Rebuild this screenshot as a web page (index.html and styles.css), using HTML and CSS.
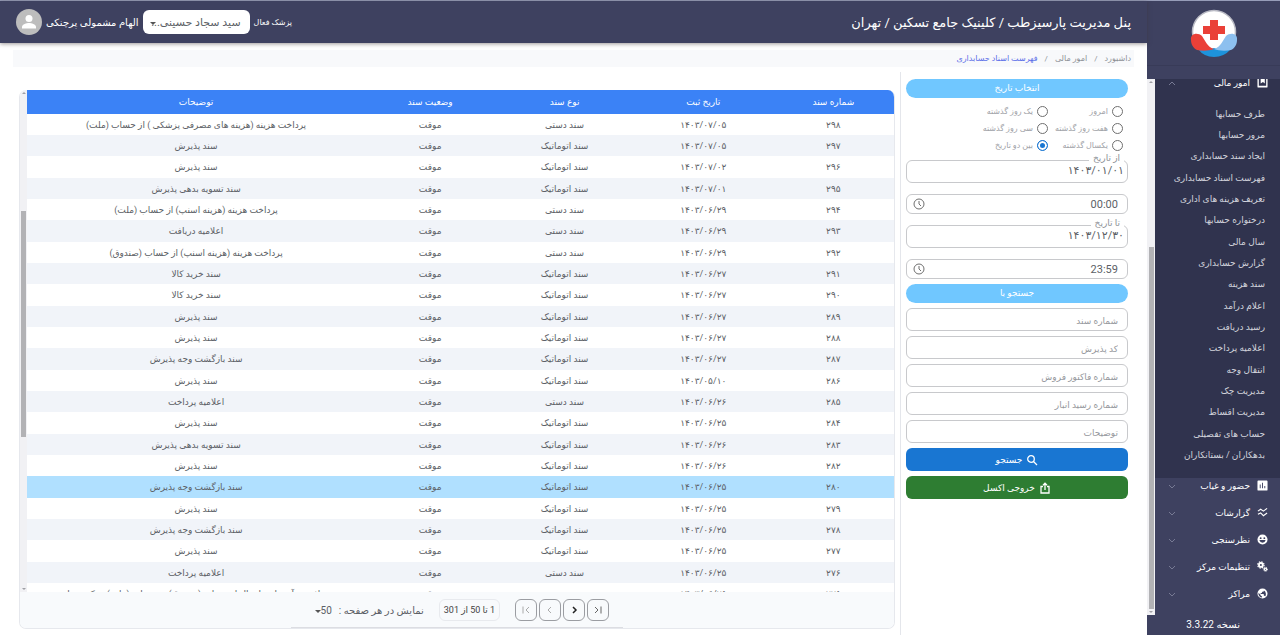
FILE: index.html
```html
<!DOCTYPE html>
<html lang="fa" dir="rtl">
<head>
<meta charset="utf-8">
<title>فهرست اسناد حسابداری</title>
<link rel="stylesheet" href="styles.css">
</head>
<body>
<div class="app">
  <aside class="sidebar">
    <div class="brand">
      <svg class="brand-logo" viewBox="0 0 48 50" role="img" aria-label="پارسیزطب">
        <circle cx="24" cy="23" r="21.500" fill="#fff" stroke="#b9bac4" stroke-width="1.500"/>
        <path d="M8 40Q16 42 24 39Q32 42 41 40Q34 48 24 48Q14 48 8 40z" fill="#1d93dc"/>
        <path d="M1 31C0 24 8 23 12 27C15 31 17 38 24 40C19 42 12 42 7 41C3 39 1 35 1 31z" fill="#ea4038"/>
        <path d="M47 31C48 24 40 23 36 27C33 31 31 38 24 40C29 42 36 42 41 41C45 39 47 35 47 31z" fill="#8dc0ef"/>
        <path d="M20 11h8v6h7v8h-7v6h-8v-6h-7v-8h7z" fill="#ea4038"/>
      </svg>
    </div>
    <div class="menu-area">
      <nav class="menu">
        <section class="menu-open">
          <button class="menu-item" type="button">
            <svg class="menu-icon" viewBox="0 0 24 24"><path fill="#fff" fill-rule="evenodd" d="M3 1h18a2 2 0 0 1 2 2v18a2 2 0 0 1-2 2H3a2 2 0 0 1-2-2V3a2 2 0 0 1 2-2zm1 3v15h16V4h-3v10l-4-3-5 3V4z"/></svg>
            <span>امور مالی</span>
            <svg class="menu-chevron" viewBox="0 0 10 10"><path d="M2 7l3-3 3 3"/></svg>
          </button>
          <ul class="submenu">
            <li><a href="#">طرف حسابها</a></li>
            <li><a href="#">مرور حسابها</a></li>
            <li><a href="#">ایجاد سند حسابداری</a></li>
            <li><a href="#">فهرست اسناد حسابداری</a></li>
            <li><a href="#">تعریف هزینه های اداری</a></li>
            <li><a href="#">درختواره حسابها</a></li>
            <li><a href="#">سال مالی</a></li>
            <li><a href="#">گزارش حسابداری</a></li>
            <li><a href="#">سند هزینه</a></li>
            <li><a href="#">اعلام درآمد</a></li>
            <li><a href="#">رسید دریافت</a></li>
            <li><a href="#">اعلامیه پرداخت</a></li>
            <li><a href="#">انتقال وجه</a></li>
            <li><a href="#">مدیریت چک</a></li>
            <li><a href="#">مدیریت اقساط</a></li>
            <li><a href="#">حساب های تفصیلی</a></li>
            <li><a href="#">بدهکاران / بستانکاران</a></li>
          </ul>
        </section>
        <section class="menu-rest">
          <button class="menu-item" type="button">
            <svg class="menu-icon" viewBox="0 0 24 24"><path fill="#fff" fill-rule="evenodd" d="M3 1h18a2 2 0 0 1 2 2v18a2 2 0 0 1-2 2H3a2 2 0 0 1-2-2V3a2 2 0 0 1 2-2zm3 9v8h2v-8zm5-4v12h2V6zm5 7v5h2v-5z"/></svg>
            <span>حضور و غیاب</span>
            <svg class="menu-chevron" viewBox="0 0 10 10"><path d="M2 4l3 3 3-3"/></svg>
          </button>
          <button class="menu-item" type="button">
            <svg class="menu-icon" viewBox="0 0 24 24"><path fill="none" stroke="#fff" stroke-width="2.500" d="M2 9l6-4 6 4 8-6M2 16l6-3 6 6 8-6"/></svg>
            <span>گزارشات</span>
            <svg class="menu-chevron" viewBox="0 0 10 10"><path d="M2 4l3 3 3-3"/></svg>
          </button>
          <button class="menu-item" type="button">
            <svg class="menu-icon" viewBox="0 0 24 24"><circle cx="12" cy="12" r="11" fill="#fff"/><circle cx="8" cy="9" r="2" fill="#3e4160"/><circle cx="16" cy="9" r="2" fill="#3e4160"/><path fill="#3e4160" d="M5 13h14q-2 6-7 6t-7-6z"/></svg>
            <span>نظرسنجی</span>
            <svg class="menu-chevron" viewBox="0 0 10 10"><path d="M2 4l3 3 3-3"/></svg>
          </button>
          <button class="menu-item" type="button">
            <svg class="menu-icon" viewBox="0 0 24 24"><g fill="none" stroke="#fff"><circle cx="8.500" cy="8.500" r="4.200" stroke-width="4"/><circle cx="8.500" cy="8.500" r="7" stroke-width="2.500" stroke-dasharray="3 2.500"/><circle cx="18.500" cy="18" r="2.600" stroke-width="2.600"/><circle cx="18.500" cy="18" r="4.500" stroke-width="2" stroke-dasharray="2.200 1.900"/></g></svg>
            <span>تنظیمات مرکز</span>
            <svg class="menu-chevron" viewBox="0 0 10 10"><path d="M2 4l3 3 3-3"/></svg>
          </button>
          <button class="menu-item" type="button">
            <svg class="menu-icon" viewBox="0 0 24 24"><path fill="#fff" d="M12 1a11 11 0 1 0 0 22 11 11 0 0 0 0-22zm-1 19.900A9 9 0 0 1 3.300 10.200L8 15v1c0 1.100.900 2 2 2h1zm6.900-2.500A2 2 0 0 0 16 17h-1v-3a1 1 0 0 0-1-1H8v-2h2a1 1 0 0 0 1-1V8h2a2 2 0 0 0 2-2v-.400a9 9 0 0 1 2.900 12.800z"/></svg>
            <span>مراکز</span>
            <svg class="menu-chevron" viewBox="0 0 10 10"><path d="M2 4l3 3 3-3"/></svg>
          </button>
        </section>
      </nav>
      <div class="scrollbar menu-scrollbar" aria-hidden="true"><i class="arrow-up"></i><i class="thumb"></i><i class="arrow-down"></i></div>
    </div>
    <div class="version">نسخه 3.3.22</div>
  </aside>

  <div class="page">
    <header class="topbar">
      <h1 class="topbar-title">پنل مدیریت پارسیزطب / کلینیک جامع تسکین / تهران</h1>
      <div class="topbar-user">
        <label class="doctor-label" for="doctor">پزشک فعال</label>
        <span class="select-wrap">
          <select class="doctor-select" id="doctor"><option>سید سجاد حسینی...</option></select>
          <i class="caret doctor-caret"></i>
        </span>
        <span class="user-name">الهام مشمولی پرچنکی</span>
        <svg class="avatar" viewBox="0 0 26 26" role="img" aria-label="کاربر"><circle cx="13" cy="13" r="13" fill="#bdbdbd"/><circle cx="13" cy="9.500" r="3.500" fill="#fff"/><path fill="#fff" d="M6 19.500v-1.500c0-2.600 4.600-4 7-4s7 1.400 7 4v1.500z"/></svg>
      </div>
    </header>

    <nav class="breadcrumb">
      <a href="#">داشبورد</a><span>/</span><a href="#">امور مالی</a><span>/</span><a class="current" href="#">فهرست اسناد حسابداری</a>
    </nav>

    <main class="content">
      <form class="filters">
        <h2 class="pill">انتخاب تاریخ</h2>
        <div class="ranges">
          <label><input type="radio" name="range">امروز</label>
          <label><input type="radio" name="range">یک روز گذشته</label>
          <label><input type="radio" name="range">هفت روز گذشته</label>
          <label><input type="radio" name="range">سی روز گذشته</label>
          <label><input type="radio" name="range">یکسال گذشته</label>
          <label><input type="radio" name="range" checked>بین دو تاریخ</label>
        </div>
        <div class="date-field">
          <label for="from-date">از تاریخ</label>
          <input class="field date-input" id="from-date" type="text" value="۱۴۰۳/۰۱/۰۱">
        </div>
        <div class="time-field">
          <input class="field time-input" type="text" value="00:00" aria-label="از ساعت">
          <svg class="clock" viewBox="0 0 12 12"><circle cx="6" cy="6" r="5"/><path d="M6 3v3l2 2"/></svg>
        </div>
        <div class="date-field">
          <label for="to-date">تا تاریخ</label>
          <input class="field date-input" id="to-date" type="text" value="۱۴۰۳/۱۲/۳۰">
        </div>
        <div class="time-field last">
          <input class="field time-input" type="text" value="23:59" aria-label="تا ساعت">
          <svg class="clock" viewBox="0 0 12 12"><circle cx="6" cy="6" r="5"/><path d="M6 3v3l2 2"/></svg>
        </div>
        <h2 class="pill">جستجو با</h2>
        <div class="stack">
          <input class="field" type="text" placeholder="شماره سند" aria-label="شماره سند">
          <input class="field" type="text" placeholder="کد پذیرش" aria-label="کد پذیرش">
          <input class="field" type="text" placeholder="شماره فاکتور فروش" aria-label="شماره فاکتور فروش">
          <input class="field" type="text" placeholder="شماره رسید انبار" aria-label="شماره رسید انبار">
          <input class="field" type="text" placeholder="توضیحات" aria-label="توضیحات">
          <button class="action search" type="button"><svg viewBox="0 0 12 12"><circle cx="5" cy="5" r="3.300"/><path d="M7.500 7.500l3.500 3.500"/></svg>جستجو</button>
          <button class="action export" type="button"><svg viewBox="0 0 12 12"><path d="M4 4.500H2v6.500h8V4.500H8M6 8V1.500M4 3.200l2-2 2 2"/></svg>خروجی اکسل</button>
        </div>
      </form>

      <section class="card">
        <div class="table-area">
          <div class="table-view">
            <table class="docs">
              <colgroup><col class="c-num"><col class="c-date"><col class="c-type"><col class="c-state"><col class="c-desc"></colgroup>
              <thead><tr><th>شماره سند</th><th>تاریخ ثبت</th><th>نوع سند</th><th>وضعیت سند</th><th>توضیحات</th></tr></thead>
              <tbody>
                <tr><td>۲۹۸</td><td>۱۴۰۳/۰۷/۰۵</td><td>سند دستی</td><td>موقت</td><td>پرداخت هزینه (هزینه های مصرفی پزشکی ) از حساب (ملت)</td></tr>
                <tr><td>۲۹۷</td><td>۱۴۰۳/۰۷/۰۵</td><td>سند اتوماتیک</td><td>موقت</td><td>سند پذیرش</td></tr>
                <tr><td>۲۹۶</td><td>۱۴۰۳/۰۷/۰۲</td><td>سند اتوماتیک</td><td>موقت</td><td>سند پذیرش</td></tr>
                <tr><td>۲۹۵</td><td>۱۴۰۳/۰۷/۰۱</td><td>سند اتوماتیک</td><td>موقت</td><td>سند تسویه بدهی پذیرش</td></tr>
                <tr><td>۲۹۴</td><td>۱۴۰۳/۰۶/۲۹</td><td>سند دستی</td><td>موقت</td><td>پرداخت هزینه (هزینه اسنپ) از حساب (ملت)</td></tr>
                <tr><td>۲۹۳</td><td>۱۴۰۳/۰۶/۲۹</td><td>سند دستی</td><td>موقت</td><td>اعلامیه دریافت</td></tr>
                <tr><td>۲۹۲</td><td>۱۴۰۳/۰۶/۲۹</td><td>سند دستی</td><td>موقت</td><td>پرداخت هزینه (هزینه اسنپ) از حساب (صندوق)</td></tr>
                <tr><td>۲۹۱</td><td>۱۴۰۳/۰۶/۲۷</td><td>سند اتوماتیک</td><td>موقت</td><td>سند خرید کالا</td></tr>
                <tr><td>۲۹۰</td><td>۱۴۰۳/۰۶/۲۷</td><td>سند اتوماتیک</td><td>موقت</td><td>سند خرید کالا</td></tr>
                <tr><td>۲۸۹</td><td>۱۴۰۳/۰۶/۲۷</td><td>سند اتوماتیک</td><td>موقت</td><td>سند پذیرش</td></tr>
                <tr><td>۲۸۸</td><td>۱۴۰۳/۰۶/۲۷</td><td>سند اتوماتیک</td><td>موقت</td><td>سند پذیرش</td></tr>
                <tr><td>۲۸۷</td><td>۱۴۰۳/۰۶/۲۷</td><td>سند اتوماتیک</td><td>موقت</td><td>سند بازگشت وجه پذیرش</td></tr>
                <tr><td>۲۸۶</td><td>۱۴۰۳/۰۵/۱۰</td><td>سند اتوماتیک</td><td>موقت</td><td>سند پذیرش</td></tr>
                <tr><td>۲۸۵</td><td>۱۴۰۳/۰۶/۲۶</td><td>سند دستی</td><td>موقت</td><td>اعلامیه پرداخت</td></tr>
                <tr><td>۲۸۴</td><td>۱۴۰۳/۰۶/۲۵</td><td>سند اتوماتیک</td><td>موقت</td><td>سند پذیرش</td></tr>
                <tr><td>۲۸۳</td><td>۱۴۰۳/۰۶/۲۶</td><td>سند اتوماتیک</td><td>موقت</td><td>سند تسویه بدهی پذیرش</td></tr>
                <tr><td>۲۸۲</td><td>۱۴۰۳/۰۶/۲۶</td><td>سند اتوماتیک</td><td>موقت</td><td>سند پذیرش</td></tr>
                <tr class="selected"><td>۲۸۰</td><td>۱۴۰۳/۰۶/۲۵</td><td>سند اتوماتیک</td><td>موقت</td><td>سند بازگشت وجه پذیرش</td></tr>
                <tr><td>۲۷۹</td><td>۱۴۰۳/۰۶/۲۵</td><td>سند اتوماتیک</td><td>موقت</td><td>سند پذیرش</td></tr>
                <tr><td>۲۷۸</td><td>۱۴۰۳/۰۶/۲۵</td><td>سند اتوماتیک</td><td>موقت</td><td>سند بازگشت وجه پذیرش</td></tr>
                <tr><td>۲۷۷</td><td>۱۴۰۳/۰۶/۲۵</td><td>سند اتوماتیک</td><td>موقت</td><td>سند پذیرش</td></tr>
                <tr><td>۲۷۶</td><td>۱۴۰۳/۰۶/۲۵</td><td>سند دستی</td><td>موقت</td><td>اعلامیه پرداخت</td></tr>
                <tr><td>۲۷۵</td><td>۱۴۰۳/۰۶/۲۵</td><td>سند دستی</td><td>موقت</td><td>دریافت درآمد بابت انتقال از حساب (صندوق) به حساب (ملت) مرکز درمان</td></tr>
              </tbody>
            </table>
          </div>
          <div class="scrollbar table-scrollbar" aria-hidden="true"><i class="arrow-up"></i><i class="thumb"></i><i class="arrow-down"></i></div>
        </div>
        <footer class="pager">
          <div class="pager-buttons">
            <button type="button" aria-label="صفحه آخر"><svg viewBox="0 0 12 12"><path d="M3 3l3 3-3 3M9 2.500v7"/></svg></button>
            <button class="strong" type="button" aria-label="صفحه بعد"><svg viewBox="0 0 12 12"><path d="M5 3l3 3-3 3"/></svg></button>
            <button class="off" type="button" disabled aria-label="صفحه قبل"><svg viewBox="0 0 12 12"><path d="M7 3L4 6l3 3"/></svg></button>
            <button class="off" type="button" disabled aria-label="صفحه اول"><svg viewBox="0 0 12 12"><path d="M9 3L6 6l3 3M3 2.500v7"/></svg></button>
          </div>
          <span class="pager-range">1 تا 50 از 301</span>
          <label class="pager-label" for="size">نمایش در هر صفحه :</label>
          <span class="select-wrap">
            <select class="size-select" id="size"><option>50</option></select>
            <i class="caret size-caret"></i>
          </span>
        </footer>
      </section>
    </main>
  </div>
</div>
</body>
</html>
```
FILE: styles.css
```css
* { box-sizing: border-box; }

body {
  margin: 0;
  background: #fff;
  color: #5c5f66;
  font-family: Roboto, "DejaVu Sans", sans-serif;
  font-size: 9px;
}

button, input, select { font: inherit; color: inherit; margin: 0; }
button { cursor: pointer; }
h1, h2, ul { margin: 0; padding: 0; font-weight: 400; }
a { color: inherit; text-decoration: none; }

.app { display: flex; height: 100vh; min-height: 600px; border-top: 1px solid #969cb8; }

/* Sidebar */
.sidebar {
  display: flex;
  flex-direction: column;
  flex: 0 0 133px;
  background: #3e4160;
  color: #fff;
}
.brand {
  display: flex;
  justify-content: center;
  height: 65px;
  padding-top: 8px;
  margin-bottom: 13px;
  border-bottom: 1px solid #383b58;
}
.brand-logo { width: 48px; height: 50px; }
.menu-area { display: flex; flex: 1; min-height: 0; }
.menu {
  display: flex;
  flex: 1;
  flex-direction: column;
  justify-content: flex-end;
  overflow: hidden;
}
.menu-open { background: #30334e; padding-bottom: 12px; }
.menu-item {
  display: flex;
  align-items: center;
  gap: 7px;
  width: 100%;
  height: 27px;
  padding: 0 12px 12px;
  border: 0;
  background: none;
  color: #fff;
  font-weight: 500;
}
.menu-icon { width: 11px; height: 11px; }
.menu-chevron {
  width: 10px;
  height: 10px;
  margin-right: auto;
  fill: none;
  stroke: #777a94;
}
.menu-open .menu-item { height: 35px; padding-bottom: 8px; }
.submenu { list-style: none; }
.submenu li { height: 21px; padding-right: 15px; line-height: 21px; color: #d2d3dc; font-size: 9px; }
.submenu li:nth-child(3n) { height: 22px; }
.menu-rest { padding-bottom: 2px; }
.version { height: 20px; padding-right: 40px; line-height: 20px; font-size: 10px; }

/* Drawn scrollbars */
.scrollbar { display: flex; flex-direction: column; align-items: center; flex: 0 0 8px; background: #f1f1f4; }
.scrollbar .thumb { width: 5px; background: #b2b2b5; }
.arrow-up, .arrow-down { flex: none; width: 0; height: 0; border: 2px solid transparent; margin: 2px 0; }
.arrow-up { border-bottom-color: #a0a0a5; border-top: 0; }
.arrow-down { border-top-color: #a0a0a5; border-bottom: 0; }
.menu-scrollbar .thumb { flex: 1; margin-top: 162px; }
.table-scrollbar { flex-basis: 7px; }
.table-scrollbar .thumb { flex: 0 0 45%; margin-top: 115px; }
.table-scrollbar .arrow-down { margin-top: auto; }

/* Top bar */
.page { display: flex; flex: 1; flex-direction: column; min-width: 0; }
.topbar {
  display: flex;
  align-items: center;
  justify-content: space-between;
  flex: 0 0 42px;
  padding: 0 16px;
  background: #3e4160;
  color: #fff;
  box-shadow: 0 1px 4px rgba(60, 50, 50, .5);
}
.topbar-title { font-size: 13px; }
.topbar-user { display: flex; align-items: center; gap: 4px; }
.doctor-label { font-size: 8px; }
.select-wrap { position: relative; display: flex; }
select { appearance: none; border: 0; background: none; }
.doctor-select {
  width: 107px;
  height: 24px;
  padding: 0 9px 0 8px;
  border-radius: 6px;
  background: #fff;
  color: #5c5f66;
  font-size: 11px;
}
.caret {
  position: absolute;
  top: 50%;
  left: 0;
  border: 3px solid transparent;
  border-top-color: #555;
  border-bottom: 0;
}
.doctor-caret { left: 7px; }
.user-name { font-size: 10px; }
.avatar { width: 26px; height: 26px; }

/* Breadcrumb */
.breadcrumb {
  display: flex;
  align-items: center;
  gap: 7px;
  flex: 0 0 17px;
  margin: 7px 13px 5px;
  padding-right: 3px;
  background: #f8f9fb;
  color: #8d9096;
  font-size: 8px;
}
.breadcrumb .current { color: #5b6ee8; }

/* Filters */
.content { display: flex; flex: 1; min-height: 0; }
.filters { flex: 0 0 247px; padding: 7px 19px 0 5px; border-left: 1px solid #e4e6eb; }
.pill {
  height: 19px;
  border-radius: 10px;
  background: #70c7ff;
  color: #fff;
  font-size: 9px;
  line-height: 19px;
  text-align: center;
}
.ranges {
  display: grid;
  grid-template-columns: 75px 1fr;
  grid-auto-rows: 17px;
  padding: 5px 5px 6px 0;
  color: #a0a2a7;
  font-size: 8px;
}
.ranges label { display: flex; align-items: center; gap: 4px; white-space: nowrap; }
.ranges input {
  flex: none;
  appearance: none;
  width: 11px;
  height: 11px;
  border: 1px solid #6f6f6f;
  border-radius: 50%;
}
.ranges input:checked {
  border-color: #1976d2;
  background: #1976d2;
  box-shadow: inset 0 0 0 2px #fff;
}
.field {
  display: block;
  width: 100%;
  height: 23px;
  padding: 2px 9px 0;
  border: 1px solid #c8c9cc;
  border-radius: 6px;
  background: #fff;
}
.field::placeholder { color: #96989d; opacity: 1; }
.date-field, .time-field { position: relative; margin-bottom: 11px; }
.date-field label {
  position: absolute;
  top: -7px;
  right: 4px;
  padding: 0 4px;
  background: #fff;
  color: #8d9096;
  line-height: 10px;
}
.date-input { padding: 0 3px 3px; font-size: 11px; }
.time-input { height: 20px; padding: 0 9px; font-size: 11px; }
.time-field.last { margin-bottom: 5px; }
.clock {
  position: absolute;
  top: 4px;
  left: 7px;
  width: 12px;
  height: 12px;
  fill: none;
  stroke: #6f6f6f;
}
.stack { display: grid; gap: 5px; margin-top: 5px; }
.action {
  display: flex;
  align-items: center;
  justify-content: center;
  gap: 4px;
  height: 23px;
  border: 0;
  border-radius: 6px;
  color: #fff;
}
.action svg { width: 12px; height: 12px; fill: none; stroke: #fff; stroke-width: 1.300; }
.search { background: #1976d2; }
.export { background: #2e7d32; }

/* Document table */
.card {
  position: relative;
  display: flex;
  flex: 1;
  flex-direction: column;
  min-width: 0;
  margin: 18px 5px 6px 19px;
  border: solid #e6e8ed;
  border-width: 0 1px 1px;
  border-radius: 7px;
  overflow: hidden;
}
.table-area { display: flex; flex: 1; min-height: 0; }
.table-view { flex: 1; min-width: 0; overflow: hidden; }
.docs { width: 100%; table-layout: fixed; border-collapse: collapse; text-align: center; }
.c-num { width: 14%; }
.c-date { width: 16%; }
.c-type { width: 16%; }
.c-state { width: 15%; }
.docs th { height: 24px; padding: 0; background: #3b82f6; color: #fff; font-weight: 400; }
.docs td { height: 21px; padding: 0; line-height: 12px; white-space: nowrap; }
.docs tr:nth-child(3n) td { height: 22px; }
.docs tbody tr:nth-child(even) { background: #f1f4f9; }
.docs tbody tr.selected:nth-child(n) { background: #b0e0ff; }

/* Pager */
.pager {
  display: flex;
  align-items: center;
  justify-content: center;
  flex: 0 0 36px;
  padding-left: 10px;
  background: #f8fafc;
}
.card::after {
  position: absolute;
  bottom: 0;
  left: 31%;
  width: 38%;
  border-bottom: 1px solid #dcdde2;
  content: "";
}
.pager-buttons { display: flex; gap: 2px; }
.pager-buttons button {
  display: grid;
  place-items: center;
  width: 22px;
  height: 22px;
  padding: 0;
  border: 1px solid #9b9da2;
  border-radius: 6px;
  background: none;
}
.pager-buttons svg { width: 12px; height: 12px; fill: none; stroke: #666; }
.pager-buttons .strong svg { stroke: #222; stroke-width: 1.500; }
.pager-buttons .off svg { stroke: #aaa; }
.pager-range {
  margin: 0 15px;
  padding: 0 4px;
  border: 1px solid #e8eaee;
  border-radius: 6px;
  color: #444;
  font-size: 9px;
  line-height: 20px;
}
.pager-label { font-size: 10px; }
.size-select { width: 17px; height: 20px; padding: 0; margin-right: 7px; font-size: 10px; }
.size-caret { left: 0; }
```
